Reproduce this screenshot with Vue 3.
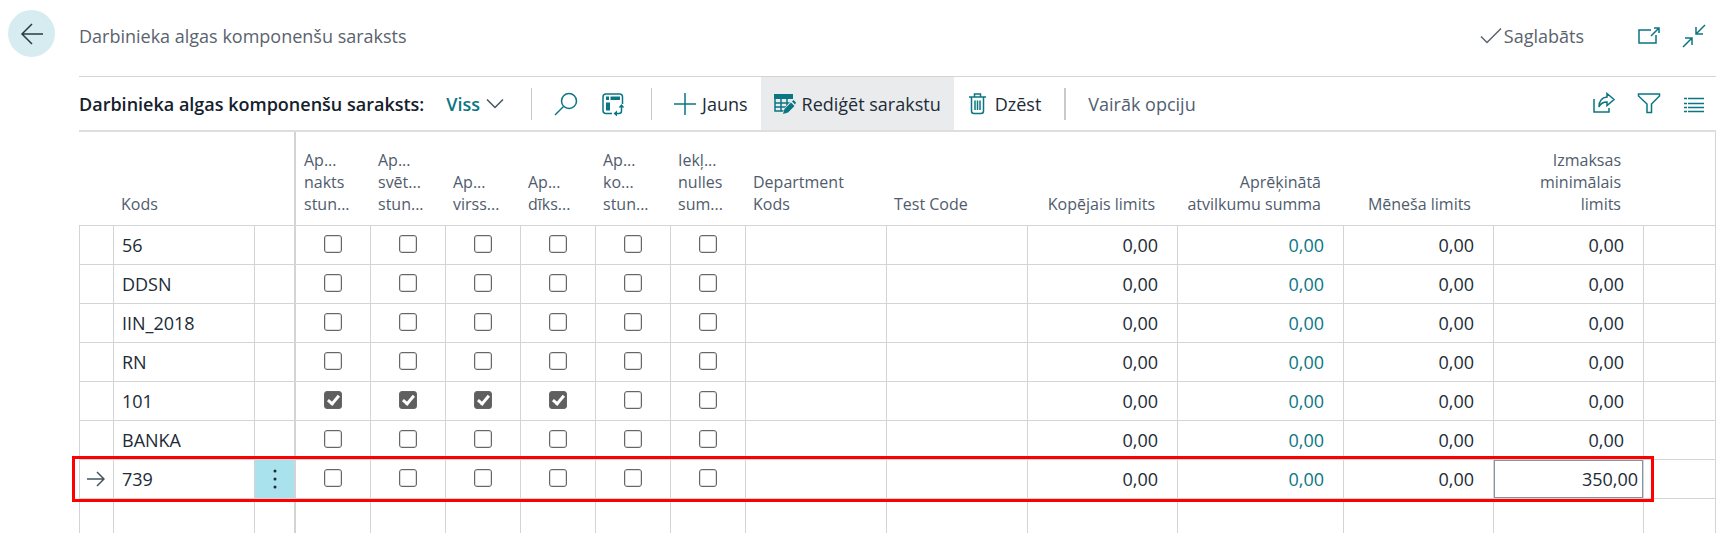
<script setup>
import { ref } from 'vue'

const flags = [
  ['Ap...', 'nakts', 'stun...'],
  ['Ap...', 'svēt...', 'stun...'],
  ['Ap...', 'virss...'],
  ['Ap...', 'dīks...'],
  ['Ap...', 'ko...', 'stun...'],
  ['Iekļ...', 'nulles', 'sum...'],
]
const none = () => [false, false, false, false, false, false]
const rows = ref([
  { code: '56', checks: none() },
  { code: 'DDSN', checks: none() },
  { code: 'IIN_2018', checks: none() },
  { code: 'RN', checks: none() },
  { code: '101', checks: [true, true, true, true, false, false] },
  { code: 'BANKA', checks: none() },
  { code: '739', checks: none(), active: true },
])
const minLimit = ref('350,00')
</script>

<template>
  <div class="page">
    <button class="back" aria-label="Atpakaļ">
      <svg width="24" height="24" viewBox="0 0 24 24"><path d="M23 12H2M12 2 2 12l10 10" /></svg>
    </button>
    <main class="content">
      <header class="top">
        <h1>Darbinieka algas komponenšu saraksts</h1>
        <div class="saved">
          <svg width="22" height="18" viewBox="0 0 22 18"><path d="M1 9.500l6 6L21 1.500" /></svg>
          <span>Saglabāts</span>
        </div>
        <div class="icons">
          <button class="icon" aria-label="Atvērt jaunā logā">
            <svg width="24" height="24" viewBox="0 0 24 24"><path d="M14 6H2v13h17v-8M14 12l8-8M17 4h5v5" /></svg>
          </button>
          <button class="icon" aria-label="Sakļaut">
            <svg width="24" height="24" viewBox="0 0 24 24"><path d="M23 1 14 10M14 3v7h7M1 23l9-9M3 14h7v7" /></svg>
          </button>
        </div>
      </header>

      <div class="toolbar">
        <h2>Darbinieka algas komponenšu saraksts:</h2>
        <button class="view">
          <span>Viss</span>
          <svg width="18" height="12" viewBox="0 0 18 12"><path d="M1 1.500l8 8 8-8" /></svg>
        </button>
        <i class="sep"></i>
        <button class="icon search" aria-label="Meklēt">
          <svg width="24" height="24" viewBox="0 0 24 24"><circle cx="15" cy="9" r="7.500" /><path d="M9.500 14.500 1 23" /></svg>
        </button>
        <button class="icon analyze" aria-label="Analizēt">
          <svg width="22" height="24" viewBox="0 0 22 24">
            <path d="M10 21.500H4a3 3 0 0 1-3-3V5a3 3 0 0 1 3-3h13.500a3 3 0 0 1 3 3v7" />
            <path class="solid" d="M4 4.500h3v3.500H4zM8.500 4.500h9.500v3.500H8.500zM4 10.500h4v8H4z" />
            <path d="M13 21.500h4a2.500 2.500 0 0 0 2.500-2.500V14" />
            <path class="solid" d="M11.500 21.500l3.500-3v6zM16.500 15.500l3-3.500 3 3.500z" />
          </svg>
        </button>
        <i class="sep"></i>
        <button class="action">
          <svg width="22" height="22" viewBox="0 0 22 22"><path d="M11 0v22M0 11h22" /></svg>
          <span>Jauns</span>
        </button>
        <button class="action edit">
          <svg width="22" height="22" viewBox="0 0 22 22">
            <path class="solid" d="M0 1h19v5H0z" />
            <path d="M1 5v13h9M1 10h16M1 14h12M7 5v13M13 5v8" />
            <path class="halo" d="M9 21l2-5 8-9 3 3-8 9z" />
            <path class="solid" d="M9 21l1.500-5L17 9.500l3.500 3.500-6.500 6.500zM18 8.500 19.500 7 22 9.500 21 11.500z" />
          </svg>
          <span>Rediģēt sarakstu</span>
        </button>
        <button class="action delete">
          <svg width="18" height="22" viewBox="0 0 18 22"><path d="M0 4h17M5.500 4V1h6v3M2.500 4v14a2.500 2.500 0 0 0 2.500 2.500h7a2.500 2.500 0 0 0 2.500-2.500V4M6 7.500v9.500M8.500 7.500v9.500M11 7.500v9.500" /></svg>
          <span>Dzēst</span>
        </button>
        <i class="sep wide"></i>
        <button class="more">Vairāk opciju</button>
        <div class="icons">
          <button class="icon" aria-label="Kopīgot">
            <svg width="24" height="24" viewBox="0 0 24 24"><path d="M2 7v13h15v-4M15 1.500l7 6-7 6V10c-4 0-6.500 1.500-8 5 0-6 3-9.500 8-10z" /></svg>
          </button>
          <button class="icon" aria-label="Filtrēt">
            <svg width="24" height="24" viewBox="0 0 24 24"><path d="M1.500 2h21v2l-8 8v8.500h-4.500V12l-8.500-8z" /></svg>
          </button>
          <button class="icon" aria-label="Saraksts">
            <svg width="24" height="24" viewBox="0 0 24 24"><path d="M2 6.500h3M6 6.500h16M2 11.500h3M6 11.500h16M2 15.500h3M6 15.500h16M2 19.500h3M6 19.500h16" /></svg>
          </button>
        </div>
      </div>

      <table>
        <colgroup>
          <col class="c-mark" /><col class="c-code" /><col class="c-menu" />
          <col v-for="(f, i) in flags" :key="i" :class="i === 0 ? 'c-first' : 'c-flag'" />
          <col class="c-dim" /><col class="c-dim" />
          <col class="c-num" /><col class="c-sum" /><col class="c-num" /><col class="c-num" />
          <col />
        </colgroup>
        <thead>
          <tr>
            <th></th>
            <th>Kods</th>
            <th></th>
            <th v-for="(f, i) in flags" :key="i" :class="{ frozen: i === 0 }">
              <div v-for="line in f" :key="line">{{ line }}</div>
            </th>
            <th>Department<br />Kods</th>
            <th>Test Code</th>
            <th class="num">Kopējais limits</th>
            <th class="num">Aprēķinātā<br />atvilkumu summa</th>
            <th class="num">Mēneša limits</th>
            <th class="num">Izmaksas<br />minimālais<br />limits</th>
            <th></th>
          </tr>
        </thead>
        <tbody>
          <tr v-for="row in rows" :key="row.code" :class="{ active: row.active }">
            <td class="mark">
              <svg v-if="row.active" width="18" height="16" viewBox="0 0 18 16"><path d="M0 8h17M10 1l7 7-7 7" /></svg>
              <span v-if="row.active" class="outline"></span>
            </td>
            <td class="code">{{ row.code }}</td>
            <td class="menu">
              <button v-if="row.active" aria-label="Rādīt vairāk opciju">
                <svg width="4" height="20" viewBox="0 0 4 20"><circle cx="2" cy="2" r="1.500" /><circle cx="2" cy="10" r="1.500" /><circle cx="2" cy="18" r="1.500" /></svg>
              </button>
            </td>
            <td v-for="(c, i) in row.checks" :key="i" class="flag" :class="{ frozen: i === 0 }">
              <input v-model="row.checks[i]" type="checkbox" :aria-label="flags[i].join(' ')" />
            </td>
            <td></td>
            <td></td>
            <td class="num">0,00</td>
            <td class="num"><a href="#">0,00</a></td>
            <td class="num">0,00</td>
            <td v-if="row.active" class="field"><input v-model="minLimit" type="text" aria-label="Izmaksas minimālais limits" /></td>
            <td v-else class="num">0,00</td>
            <td></td>
          </tr>
          <tr>
            <td v-for="n in 14" :key="n" :class="{ frozen: n === 4 }"></td>
            <td></td>
            <td></td>
          </tr>
        </tbody>
      </table>
    </main>
  </div>
</template>

<style>
body {
  margin: 0;
  background: #fff;
}
</style>

<style scoped>
.page {
  box-sizing: border-box;
  display: flex;
  align-items: flex-start;
  gap: 24px;
  height: 100vh;
  padding: 0 10px 0 8px;
  overflow: hidden;
  font-family: "Open Sans", "Noto Sans", sans-serif;
  font-size: 18px;
  line-height: 24px;
  color: #212b36;
}
button {
  display: flex;
  align-items: center;
  padding: 0;
  border: 0;
  background: none;
  font: inherit;
  color: inherit;
  white-space: nowrap;
}
svg {
  display: block;
  flex: none;
  fill: none;
  stroke: #0b7683;
  stroke-width: 1.5;
}
.solid {
  fill: #0b7683;
  stroke: none;
}
.halo {
  fill: #e9ebed;
  stroke: #e9ebed;
}
.back {
  flex: none;
  justify-content: center;
  width: 47px;
  height: 47px;
  margin-top: 10px;
  border-radius: 50%;
  background: #d7ecf1;
}
.back svg {
  stroke: #2b3a44;
}
.content {
  flex: 1;
  min-width: 0;
}
.top {
  box-sizing: border-box;
  display: flex;
  align-items: center;
  height: 77px;
  padding-bottom: 4px;
  border-bottom: 1px solid #d2d4d6;
}
h1 {
  flex: 1;
  margin: 0;
  font-size: 18px;
  font-weight: 400;
  color: #5a636e;
}
.saved {
  display: flex;
  align-items: center;
  gap: 2px;
  margin-right: 53px;
  color: #5a636e;
}
.saved svg {
  stroke: #5a636e;
}
.icons {
  display: flex;
  gap: 21px;
  margin-right: 10px;
}
.toolbar {
  display: flex;
  align-items: center;
  height: 53px;
  border-bottom: 2px solid #dcdedf;
}
.toolbar .icons {
  margin-left: auto;
}
h2 {
  margin: 0 22px 0 0;
  font-size: 18px;
  font-weight: 600;
  color: #14212c;
  white-space: nowrap;
}
.view {
  gap: 6px;
  font-weight: 600;
  color: #0b7683;
}
.view svg {
  stroke: #44545f;
}
.sep {
  width: 1px;
  height: 32px;
  margin: 0 22px 0 27px;
  background: #c8cbce;
}
.analyze {
  margin-left: 24px;
}
.action {
  align-self: stretch;
  gap: 6px;
}
.edit {
  margin-left: 13px;
  padding: 0 13px;
  background: #e9ebed;
}
.delete {
  gap: 8px;
  margin-left: 15px;
}
.sep.wide {
  width: 2px;
  margin: 0 22px 0 23px;
}
.more {
  color: #505f70;
}
table {
  width: 100%;
  table-layout: fixed;
  border-spacing: 0;
  border-right: 1px solid #d2d4d6;
}
.c-mark { width: 34px; }
.c-code { width: 141px; }
.c-menu { width: 40px; }
.c-first { width: 76px; }
.c-flag { width: 75px; }
.c-dim { width: 141px; }
.c-num { width: 150px; }
.c-sum { width: 166px; }
th {
  height: 66px;
  padding: 17px 8px 10px;
  border-bottom: 1px solid #d2d4d6;
  font-size: 16px;
  font-weight: 400;
  line-height: 22px;
  text-align: left;
  vertical-align: bottom;
  color: #505c6d;
  white-space: nowrap;
}
th.num {
  padding-right: 22px;
  text-align: right;
}
td {
  box-sizing: border-box;
  height: 39px;
  padding: 0;
  border-bottom: 1px solid #d2d4d6;
  border-left: 1px solid #d2d4d6;
}
th.frozen,
td.frozen {
  border-left: 2px solid #d2d4d6;
}
td.code {
  padding-left: 8px;
}
td.num {
  padding-right: 19px;
  text-align: right;
}
.num a {
  color: #0b7683;
  text-decoration: none;
}
.mark svg {
  margin-left: 7px;
  stroke: #44545f;
}
td.flag {
  padding-bottom: 2px;
}
.flag input {
  appearance: none;
  box-sizing: border-box;
  display: block;
  width: 18px;
  height: 18px;
  margin: 0 auto;
  border: 1px solid #666;
  border-radius: 3px;
  background: #fff;
  box-shadow: inset 0 0 0 1px #ddd;
}
.flag input:checked {
  background: #5f5f5f;
  box-shadow: none;
}
.flag input:checked::before {
  content: "";
  display: block;
  width: 4px;
  height: 9px;
  margin: 1px auto;
  border: solid #fff;
  border-width: 0 3px 3px 0;
  transform: rotate(40deg);
}
.active {
  position: relative;
}
.menu button {
  justify-content: center;
  width: 100%;
  height: 38px;
  background: #a9e2ec;
}
.menu svg {
  fill: #1d2b36;
  stroke: none;
}
.field input {
  box-sizing: border-box;
  display: block;
  width: 100%;
  height: 38px;
  padding: 0 4px;
  border: 1px solid #8195a3;
  outline: 0;
  background: #fff;
  font: inherit;
  color: inherit;
  text-align: right;
}
.outline {
  position: absolute;
  inset: -4px 61px -3px -7px;
  border: 3px solid #fe0000;
  pointer-events: none;
}
</style>
